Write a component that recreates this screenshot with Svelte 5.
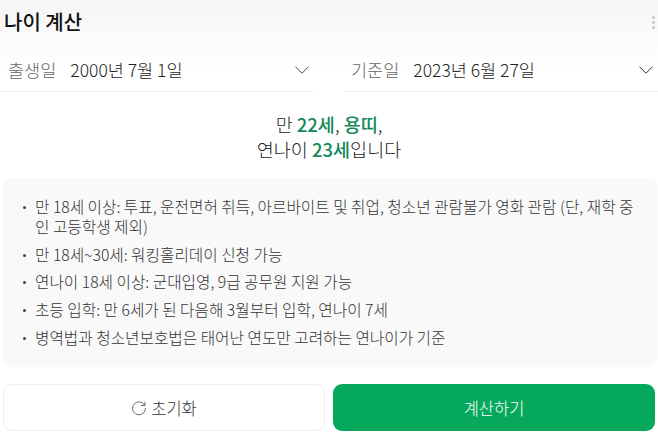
<script>
  const rules = [
    '만 18세 이상: 투표, 운전면허 취득, 아르바이트 및 취업, 청소년 관람불가 영화 관람 (단, 재학 중인 고등학생 제외)',
    '만 18세~30세: 워킹홀리데이 신청 가능',
    '연나이 18세 이상: 군대입영, 9급 공무원 지원 가능',
    '초등 입학: 만 6세가 된 다음해 3월부터 입학, 연나이 7세',
    '병역법과 청소년보호법은 태어난 연도만 고려하는 연나이가 기준'
  ];
</script>

<main>
  <header>
    <h1>나이 계산</h1>
    <span class="dots"><i></i><i></i><i></i></span>
  </header>

  <div class="dates">
    <div class="field">
      <span class="label">출생일</span>
      <span class="value">2000년 7월 1일</span>
      <svg class="chev" width="14" height="8" viewBox="0 0 14 8"><path d="M.5.8L7 7.2 13.5.8" fill="none" stroke="#444" stroke-width="1"/></svg>
    </div>
    <div class="field second">
      <span class="label">기준일</span>
      <span class="value">2023년 6월 27일</span>
      <svg class="chev" width="14" height="8" viewBox="0 0 14 8"><path d="M.5.8L7 7.2 13.5.8" fill="none" stroke="#333" stroke-width="1"/></svg>
    </div>
  </div>

  <p class="result">
    만 <b>22세</b>, <b>용띠</b>,<br />
    연나이 <b>23세</b>입니다
  </p>

  <ul class="rules">
    {#each rules as rule}
      <li>{rule}</li>
    {/each}
  </ul>

  <div class="actions">
    <button class="reset">
      <svg width="16" height="16" viewBox="0 0 16 16"><path d="M13.6 5.2A6.4 6.4 0 1 0 14.4 8" fill="none" stroke="#666" stroke-width="1"/><path d="M14 1.8v3.8h-3.8" fill="none" stroke="#666" stroke-width="1"/></svg>
      초기화
    </button>
    <button class="calc">계산하기</button>
  </div>
</main>

<style>
  :global(body) {
    background: #fff;
  }
  main {
    width: 658px;
    height: 435px;
    overflow: hidden;
    font-family: "Noto Sans CJK KR", "Liberation Sans", sans-serif;
    font-weight: 300;
    color: #222;
    background: linear-gradient(#f5f5f7 0, #fff 70px);
  }
  header {
    display: flex;
    justify-content: space-between;
    align-items: center;
    height: 44px;
    padding: 0 3px 0 4px;
  }
  h1 {
    margin: 0;
    font-size: 20px;
    line-height: 44px;
    font-weight: 500;
    color: #111;
  }
  .dots {
    display: flex;
    flex-direction: column;
    gap: 2px;
  }
  .dots i {
    width: 3px;
    height: 3px;
    border-radius: 50%;
    background: #c4c4c4;
  }
  .dates {
    display: flex;
    margin-top: 8px;
  }
  .field {
    display: flex;
    align-items: center;
    width: 314px;
    height: 40px;
    padding: 0 5px 4px 8px;
    box-sizing: border-box;
    border-bottom: 1px solid #eee;
  }
  .field.second {
    width: 312px;
    margin-left: 32px;
    padding: 0 5px 4px 5px;
  }
  .label {
    font-size: 17.5px;
    color: #666;
    margin-right: 14px;
  }
  .value {
    font-size: 17.5px;
    color: #222;
    flex: 1;
  }
  .result {
    margin: 20px 0 0;
    text-align: center;
    font-size: 18.5px;
    line-height: 25px;
    color: #222;
  }
  .result b {
    color: #14895a;
    font-weight: 500;
  }
  .rules {
    list-style: none;
    margin: 16px 0 0 3px;
    padding: 19px 14px 10px 16px;
    width: 654px;
    height: 189px;
    box-sizing: border-box;
    background: #f9f9fa;
    border-radius: 8px;
    font-size: 15.7px;
    line-height: 20px;
    color: #333;
    word-break: break-all;
  }
  .rules li {
    position: relative;
    padding-left: 16px;
    margin-bottom: 7.7px;
  }
  .rules li::before {
    content: "";
    position: absolute;
    left: 4px;
    top: 9px;
    width: 3px;
    height: 3px;
    border-radius: 50%;
    background: #444;
  }
  .actions {
    display: flex;
    gap: 8px;
    margin: 17px 3px 0;
  }
  button {
    height: 47px;
    border-radius: 9px;
    font-family: inherit;
    font-weight: 300;
    font-size: 16.5px;
    display: flex;
    align-items: center;
    justify-content: center;
    gap: 4px;
  }
  .reset {
    width: 322px;
    background: #fff;
    border: 1px solid #eee;
    color: #333;
  }
  .calc {
    width: 322px;
    background: #06a95c;
    border: 0;
    color: #fff;
  }
</style>
